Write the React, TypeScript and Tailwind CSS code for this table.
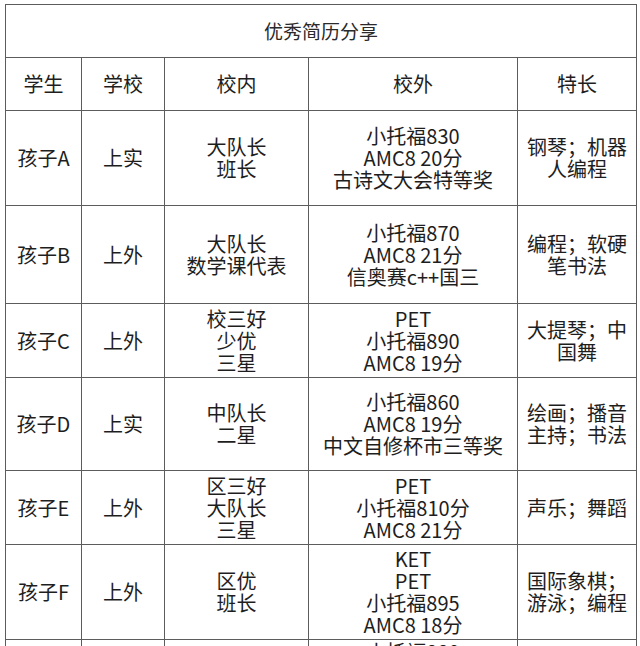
import React from 'react';

type Row = {
  name: string;
  school: string;
  inside: string[];
  outside: string[];
  talent: string[];
  h: string;
};

const rows: Row[] = [
  { name: '孩子A', school: '上实', inside: ['大队长', '班长'], outside: ['小托福830', 'AMC8 20分', '古诗文大会特等奖'], talent: ['钢琴；机器', '人编程'], h: 'h-[95px]' },
  { name: '孩子B', school: '上外', inside: ['大队长', '数学课代表'], outside: ['小托福870', 'AMC8 21分', '信奥赛c++国三'], talent: ['编程；软硬', '笔书法'], h: 'h-[98px]' },
  { name: '孩子C', school: '上外', inside: ['校三好', '少优', '三星'], outside: ['PET', '小托福890', 'AMC8 19分'], talent: ['大提琴；中', '国舞'], h: 'h-[74px]' },
  { name: '孩子D', school: '上实', inside: ['中队长', '二星'], outside: ['小托福860', 'AMC8 19分', '中文自修杯市三等奖'], talent: ['绘画；播音', '主持；书法'], h: 'h-[93px]' },
  { name: '孩子E', school: '上外', inside: ['区三好', '大队长', '三星'], outside: ['PET', '小托福810分', 'AMC8 21分'], talent: ['声乐；舞蹈'], h: 'h-[74px]' },
  { name: '孩子F', school: '上外', inside: ['区优', '班长'], outside: ['KET', 'PET', '小托福895', 'AMC8 18分'], talent: ['国际象棋；', '游泳；编程'], h: 'h-[95px]' },
];

const cell = 'border border-[#5c5c5c] text-center align-middle px-1 py-0';

function Lines({ items }: { items: string[] }) {
  return (
    <>
      {items.map((t, i) => (
        <div key={i} className="whitespace-nowrap">{t}</div>
      ))}
    </>
  );
}

export default function App() {
  return (
    <div
      className="h-[646px] w-[640px] overflow-hidden bg-white pt-[4px] pl-[5px]"
      style={{ fontFamily: '"Noto Sans CJK SC", "Noto Sans", sans-serif' }}
    >
      <table className="table-fixed border-collapse w-[631px] text-[20px] leading-[22px] text-[#1e1e1e]">
        <colgroup>
          <col className="w-[76px]" />
          <col className="w-[83px]" />
          <col className="w-[144px]" />
          <col className="w-[209px]" />
          <col className="w-[119px]" />
        </colgroup>
        <tbody>
          <tr className="h-[53px]">
            <td colSpan={5} className={`${cell} text-[19px] text-[#2a2a2a]`}>优秀简历分享</td>
          </tr>
          <tr className="h-[53px]">
            <td className={cell}>学生</td>
            <td className={cell}>学校</td>
            <td className={cell}>校内</td>
            <td className={cell}>校外</td>
            <td className={cell}>特长</td>
          </tr>
          {rows.map((r) => (
            <tr key={r.name} className={r.h}>
              <td className={cell}>{r.name}</td>
              <td className={cell}>{r.school}</td>
              <td className={cell}><Lines items={r.inside} /></td>
              <td className={cell}><Lines items={r.outside} /></td>
              <td className={cell}><Lines items={r.talent} /></td>
            </tr>
          ))}
          {/* next row, cut off by the bottom edge */}
          <tr className="h-[60px]">
            <td className={cell}></td>
            <td className={cell}></td>
            <td className={cell}></td>
            <td className={`${cell} align-top pt-[1px]`}>小托福880</td>
            <td className={cell}></td>
          </tr>
        </tbody>
      </table>
    </div>
  );
}
